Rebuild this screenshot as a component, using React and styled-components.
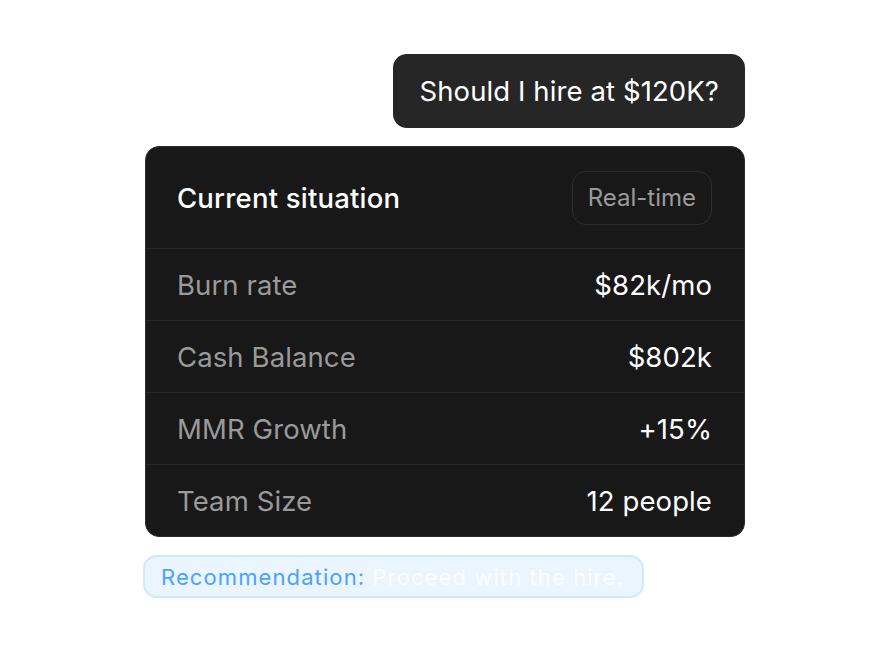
import React from 'react';
import styled, { createGlobalStyle } from 'styled-components';

const GlobalStyle = createGlobalStyle`
  html, body {
    margin: 0;
    padding: 0;
    background: #ffffff;
    font-family: Inter, "Noto Sans", sans-serif;
  }
`;

const metrics = [
  { label: 'Burn rate', value: '$82k/mo' },
  { label: 'Cash Balance', value: '$802k' },
  { label: 'MMR Growth', value: '+15%' },
  { label: 'Team Size', value: '12 people' },
];

function App() {
  return (
    <>
      <GlobalStyle />
      <Page>
        <Column>
          <Bubble>Should I hire at $120K?</Bubble>
          <Card>
            <Header>
              <Title>Current situation</Title>
              <Badge>Real-time</Badge>
            </Header>
            {metrics.map((m) => (
              <Row key={m.label}>
                <Label>{m.label}</Label>
                <Value>{m.value}</Value>
              </Row>
            ))}
          </Card>
          <Recommendation>
            <RecText>
              <strong>Recommendation:</strong> <span>Proceed with the hire.</span>
            </RecText>
          </Recommendation>
        </Column>
      </Page>
    </>
  );
}

const Page = styled.div`
  width: 888px;
  height: 652px;
  display: flex;
  justify-content: center;
  padding: 54px 0 0 2px;
  box-sizing: border-box;
`;

const Column = styled.div`
  width: 600px;
  display: flex;
  flex-direction: column;
  align-items: flex-end;
`;

const Bubble = styled.div`
  height: 74px;
  box-sizing: border-box;
  padding: 0 26px;
  display: flex;
  align-items: center;
  background: #262626;
  color: #ffffff;
  font-size: 27.5px;
  letter-spacing: 0.1px;
  border-radius: 14px;
  margin-bottom: 18px;
`;

const Card = styled.div`
  width: 600px;
  box-sizing: border-box;
  background: #181818;
  border: 1px solid #2b2b2b;
  border-radius: 14px;
  overflow: hidden;
`;

const Header = styled.div`
  height: 101px;
  display: flex;
  align-items: center;
  justify-content: space-between;
  padding: 0 32px 0 31px;
`;

const Title = styled.div`
  color: #ffffff;
  font-size: 27.5px;
  font-weight: 500;
  letter-spacing: 0.2px;
`;

const Badge = styled.div`
  height: 54px;
  box-sizing: border-box;
  padding: 0 15px;
  display: flex;
  align-items: center;
  border: 1px solid #2e2e2e;
  border-radius: 14px;
  color: #9b9b9b;
  font-size: 24px;
`;

const Row = styled.div`
  height: 72px;
  box-sizing: border-box;
  border-top: 1px solid #272727;
  display: flex;
  align-items: center;
  justify-content: space-between;
  padding: 0 32px 0 31px;
  font-size: 27.5px;
  letter-spacing: 0.1px;
`;

const Label = styled.span`
  color: #9a9a9a;
`;

const Value = styled.span`
  color: #ffffff;
`;

const Recommendation = styled.div`
  align-self: flex-start;
  margin-top: 18px;
  margin-left: -2px;
  width: 501px;
  height: 43px;
  box-sizing: border-box;
  display: flex;
  align-items: center;
  padding: 0 16px;
  background: #ebf5ff;
  border: 2px solid #cfe7ff;
  border-radius: 14px;
`;

const RecText = styled.div`
  font-size: 22px;
  letter-spacing: 1.1px;
  white-space: nowrap;

  strong {
    font-weight: 400;
    color: #4aa3ff;
  }

  span {
    color: #fbfdff;
  }
`;

export default App;
